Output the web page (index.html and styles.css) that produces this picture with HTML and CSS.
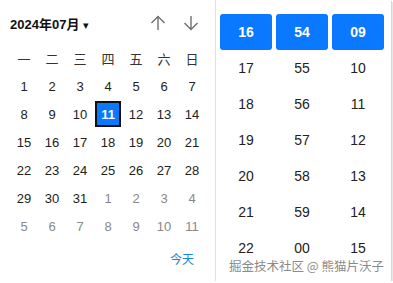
FILE: index.html
```html
<!DOCTYPE html>
<html lang="zh">

<head>
    <meta charset="UTF-8" />
    <meta name="viewport" content="width=device-width, initial-scale=1.0" />
    <title>日期时间选择</title>
    <link rel="stylesheet" href="styles.css">
</head>

<body>
    <div class="picker">
        <div class="cal">
            <div class="cal-head">
                <span class="month">2024年07月 <span class="caret">▾</span></span>
                <span class="nav">
                    <svg width="16" height="16" viewBox="0 0 16 16"><path d="M8 15V1.5M1.5 8L8 1.5 14.5 8" fill="none" stroke="#6f6f6f" stroke-width="1.4"/></svg>
                    <svg width="16" height="16" viewBox="0 0 16 16"><path d="M8 1v13.5M1.5 8L8 14.5 14.5 8" fill="none" stroke="#6f6f6f" stroke-width="1.4"/></svg>
                </span>
            </div>
            <div class="grid weekdays">
                <span>一</span><span>二</span><span>三</span><span>四</span><span>五</span><span>六</span><span>日</span>
            </div>
            <div class="grid days" id="days"></div>
            <div class="cal-foot"><a href="#">今天</a></div>
        </div>
        <div class="time">
            <div class="col" id="col-h"></div>
            <div class="col" id="col-m"></div>
            <div class="col" id="col-s"></div>
        </div>
        <div class="mark">掘金技术社区 @ 熊猫片沃子</div>
    </div>

    <script>
        const days = document.getElementById("days");
        // julio empieza lunes, después los días de agosto
        for (let d = 1; d <= 31; d++) addDay(d, d === 11 ? "sel" : "");
        for (let d = 1; d <= 11; d++) addDay(d, "other");

        function addDay(n, cls) {
            const s = document.createElement("span");
            s.textContent = n;
            if (cls) s.className = cls;
            days.appendChild(s);
        }

        function fillCol(id, start, max) {
            const col = document.getElementById(id);
            for (let i = 0; i < 7; i++) {
                const v = (start + i) % max;
                const s = document.createElement("span");
                s.textContent = String(v).padStart(2, "0");
                if (i === 0) s.className = "on";
                col.appendChild(s);
            }
        }
        fillCol("col-h", 16, 24);
        fillCol("col-m", 54, 60);
        fillCol("col-s", 9, 60);
    </script>
</body>

</html>
```

FILE: styles.css
```css
body {
    margin: 0;
    font-family: "Liberation Sans", Arial, "Noto Sans CJK SC", sans-serif;
    font-size: 13px;
    color: #222;
    background: #fff;
}

.picker {
    position: relative;
    display: flex;
    width: 391px;
    height: 281px;
    overflow: hidden;
    background: #fff;
    box-shadow: 1px 1px 0 #d6d6d6, 2px 2px 0 #e8e8e8;
}

.cal {
    width: 216px;
    padding: 0 10px;
    box-sizing: border-box;
    border-right: 1px solid #e0e0e0;
}

.cal-head {
    display: flex;
    align-items: center;
    justify-content: space-between;
    height: 30px;
    margin-top: 8px;
}

.month {
    font-weight: bold;
    font-size: 13px;
    color: #111;
}

.caret {
    font-size: 11px;
    font-weight: normal;
}

.nav {
    display: flex;
    gap: 17px;
    margin-right: 6px;
}

.grid {
    display: grid;
    grid-template-columns: repeat(7, 28px);
}

.grid span {
    display: flex;
    align-items: center;
    justify-content: center;
    height: 28px;
}

.weekdays {
    margin-top: 6px;
    color: #333;
    font-family: "Noto Sans CJK SC", sans-serif;
    font-size: 13px;
}

.days span.other {
    color: #888;
}

.days span.sel {
    margin: 1px;
    height: 26px;
    box-sizing: border-box;
    border: 2px solid #111;
    background: #0a78ff;
    color: #fff;
    font-weight: bold;
}

.cal-foot {
    display: flex;
    justify-content: flex-end;
    padding: 10px 11px 0 0;
}

.cal-foot a {
    color: #1a86d8;
    text-decoration: none;
    font-family: "Noto Sans CJK SC", sans-serif;
    font-size: 12px;
}

.time {
    display: flex;
    gap: 4px;
    padding: 14px 6px 0 4px;
}

.col {
    display: flex;
    flex-direction: column;
    width: 52px;
}

.col span {
    display: flex;
    align-items: center;
    justify-content: center;
    height: 36px;
    flex-shrink: 0;
    font-size: 14px;
}

.col span.on {
    background: #0a78ff;
    color: #fff;
    font-weight: bold;
    border-radius: 3px;
}

.mark {
    position: absolute;
    right: 7px;
    bottom: 6px;
    font-family: "Noto Sans CJK SC", sans-serif;
    font-size: 12.5px;
    color: #8a8a8a;
    text-shadow: 0 0 2px #fff, 0 0 2px #fff;
}
```
